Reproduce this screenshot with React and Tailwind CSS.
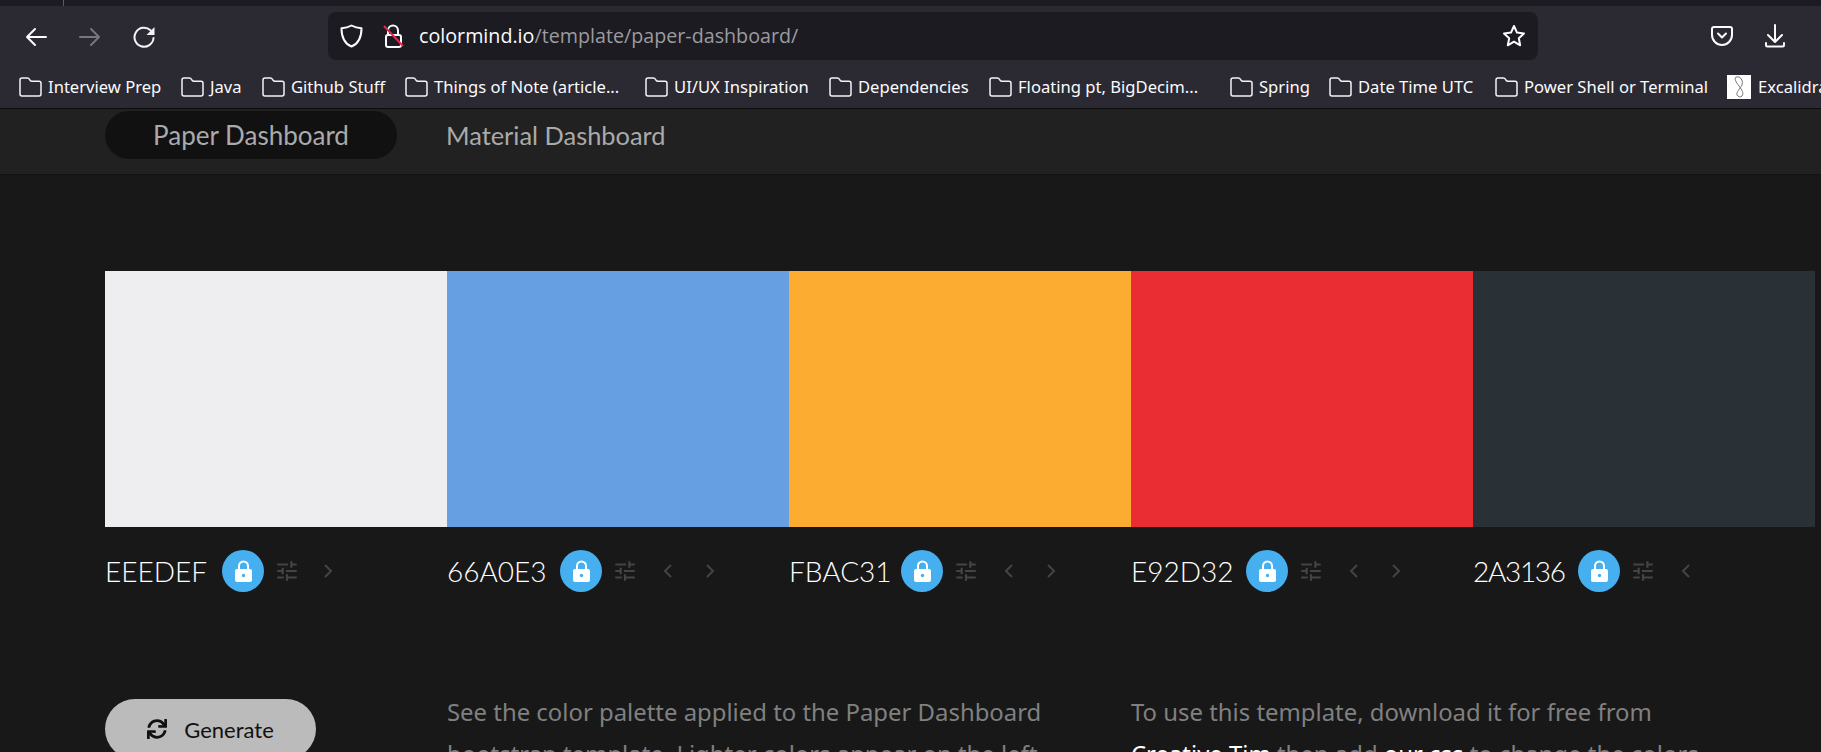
import { FaSync } from "react-icons/fa";

const bookmarks = [
  { label: "Interview Prep", width: "w-[162px]" },
  { label: "Java", width: "w-[81px]" },
  { label: "Github Stuff", width: "w-[143px]" },
  { label: "Things of Note (article...", width: "w-[240px]" },
  { label: "UI/UX Inspiration", width: "w-[184px]" },
  { label: "Dependencies", width: "w-[160px]" },
  { label: "Floating pt, BigDecim...", width: "w-[241px]" },
  { label: "Spring", width: "w-[99px]" },
  { label: "Date Time UTC", width: "w-[166px]" },
  { label: "Power Shell or Terminal", width: "w-[232px]" },
];

const swatches = [
  { hex: "EEEDEF", bg: "bg-[#eeedef]", label: "w-[117px]", left: false, right: true },
  { hex: "66A0E3", bg: "bg-[#66a0e3]", label: "w-[113px]", left: true, right: true },
  { hex: "FBAC31", bg: "bg-[#fbac31]", label: "w-[112px]", left: true, right: true },
  { hex: "E92D32", bg: "bg-[#e92d32]", label: "w-[115px]", left: true, right: true },
  { hex: "2A3136", bg: "bg-[#2a3136]", label: "w-[105px] tracking-[-1.3px]", left: true, right: false },
];

const FolderIcon = () => (
  <svg width="23" height="20" viewBox="0 0 23 20" fill="none" stroke="#f4f4f6" strokeWidth="1.5" className="shrink-0">
    <path d="M3 1h5.500c1 0 1.500.5 2 1.300l.8 1.200c.4.6.8.8 1.500.8H20a2 2 0 0 1 2 2V17a2 2 0 0 1-2 2H3a2 2 0 0 1-2-2V3a2 2 0 0 1 2-2z" />
  </svg>
);

const NavArrow = ({ flip, color }) => (
  <svg width="22" height="20" viewBox="0 0 22 20" fill="none" stroke={color} strokeWidth="2" strokeLinecap="round" strokeLinejoin="round" className={flip ? "-scale-x-100" : ""}>
    <path d="M21 10H2M10 2l-8 8 8 8" />
  </svg>
);

const ReloadIcon = () => (
  <svg width="24" height="24" viewBox="0 0 24 24" fill="none">
    <path d="M20.500 13a9.500 9.500 0 1 1-3-7.700" stroke="#f4f4f6" strokeWidth="2" strokeLinecap="round" />
    <path d="M21.500 2v8h-8z" fill="#f4f4f6" />
  </svg>
);

const ShieldIcon = () => (
  <svg width="23" height="24" viewBox="0 0 23 24" fill="none" stroke="#fbfbfe" strokeWidth="2" strokeLinejoin="round">
    <path d="M11.500 1.500c3 1.700 6 2.500 10 2.700 0 8-2 15-10 18.300C3.500 19.200 1.500 12.200 1.500 4.200c4-.2 7-1 10-2.700z" />
  </svg>
);

const BrokenLockIcon = () => (
  <svg width="22" height="26" viewBox="0 0 22 26" fill="none">
    <path d="M5 12V7.500a5 5 0 0 1 10 0V12" stroke="#fbfbfe" strokeWidth="2" />
    <rect x="3" y="12" width="15" height="12" rx="2" stroke="#fbfbfe" strokeWidth="2" />
    <path d="M1 3l19 20" stroke="#e22850" strokeWidth="2" />
  </svg>
);

const StarIcon = () => (
  <svg width="24" height="24" viewBox="0 0 24 24" fill="none" stroke="#fbfbfe" strokeWidth="2" strokeLinejoin="round">
    <path d="M12 2l3 6.600 7 .8-5.200 4.800 1.400 7.100L12 17.700l-6.200 3.600 1.400-7.100L2 9.400l7-.8z" />
  </svg>
);

const PocketIcon = () => (
  <svg width="22" height="20" viewBox="0 0 22 20" fill="none" stroke="#fbfbfe" strokeWidth="2" strokeLinecap="round" strokeLinejoin="round">
    <path d="M3 1h16a2 2 0 0 1 2 2v6a10 10 0 0 1-20 0V3a2 2 0 0 1 2-2z" />
    <path d="M7 7.500l4 4 4-4" />
  </svg>
);

const DownloadIcon = () => (
  <svg width="22" height="24" viewBox="0 0 22 24" fill="none" stroke="#fbfbfe" strokeWidth="2" strokeLinecap="round" strokeLinejoin="round">
    <path d="M11 1v16M4 11l7 7 7-7M2 19v2a1.500 1.500 0 0 0 1.500 1.500h15A1.500 1.500 0 0 0 20 21v-2" />
  </svg>
);

const LockIcon = () => (
  <svg width="17" height="22" viewBox="0 0 17 22" fill="none">
    <path d="M4 10V6a4.500 4.500 0 0 1 9 0v4" stroke="#fff" strokeWidth="2" />
    <rect x="0" y="9" width="17" height="13" rx="2" fill="#fff" />
    <circle cx="8.500" cy="15.500" r="1.700" fill="#46aff0" />
  </svg>
);

const TuneIcon = () => (
  <svg width="26" height="26" viewBox="0 0 24 24" fill="#444444">
    <path d="M3 17v2h6v-2H3zM3 5v2h10V5H3zm10 16v-2h8v-2h-8v-2h-2v6h2zM7 9v2H3v2h4v2h2V9H7zm14 4v-2H11v2h10zm-6-4h2V7h4V5h-4V3h-2v6z" />
  </svg>
);

const Chevron = ({ left }) => (
  <svg width="10" height="14" viewBox="0 0 10 14" fill="none" stroke="#444444" strokeWidth="2">
    <path d={left ? "M8 1L2 7l6 6" : "M2 1l6 6-6 6"} />
  </svg>
);

const App = () => {
  return (
    <div className="h-screen overflow-hidden bg-[#181818] font-['Noto_Sans',sans-serif]">
      {/* browser chrome */}
      <div className="h-[6px] bg-[#1c1b22] pl-[63px]">
        <div className="h-full w-px bg-[#5b5b66]"></div>
      </div>
      <div className="h-[102px] bg-[#2b2a33]">
        <div className="flex h-[54px] pt-[6px] items-center">
          <div className="flex items-center w-[328px] pl-[25px] mt-[1px]">
            <NavArrow color="#fbfbfe" />
            <div className="ml-[32px]">
              <NavArrow flip color="#77767d" />
            </div>
            <div className="ml-[32px]">
              <ReloadIcon />
            </div>
          </div>
          <div className="flex items-center w-[1210px] h-[48px] rounded-lg bg-[#1c1b22] pl-[12px] pr-[12px]">
            <ShieldIcon />
            <div className="ml-[20px]">
              <BrokenLockIcon />
            </div>
            <span className="ml-[14px] text-[19.700px] font-['Open_Sans',sans-serif] text-[#fbfbfe]">
              colormind.io<span className="text-[#9b9ba0]">/template/paper-dashboard/</span>
            </span>
            <div className="ml-auto">
              <StarIcon />
            </div>
          </div>
          <div className="ml-[173px] flex items-center gap-[31px]">
            <PocketIcon />
            <DownloadIcon />
          </div>
        </div>
        <div className="flex items-center h-[36px] mt-[9px] pl-[19px] whitespace-nowrap overflow-hidden">
          {bookmarks.map((b) => (
            <div key={b.label} className={`flex items-center gap-[6px] shrink-0 ${b.width}`}>
              <FolderIcon />
              <span className="text-[16.600px] text-[#fbfbfe]">{b.label}</span>
            </div>
          ))}
          <div className="flex items-center gap-[7px] shrink-0">
            <div className="w-[24px] h-[24px] bg-white flex items-center justify-center">
              <svg width="12" height="22" viewBox="0 0 12 22" fill="none" stroke="#666" strokeWidth="0.9">
                <path d="M3 1c-2 2 0 5 3 9s5 7 3 10c-1 1.500-4 1-5-1-1-3 3-6 5-10 1-3 0-7-3-8-1-.3-2 0-3 0z" />
              </svg>
            </div>
            <span className="text-[16.600px] text-[#fbfbfe]">Excalidraw</span>
          </div>
        </div>
      </div>
      <div className="h-px bg-[#0c0c0d]"></div>

      {/* template tabs */}
      <div className="flex h-[66px] pt-[2px] pl-[105px] bg-[#212121] border-b border-[#141414] font-['Lato',sans-serif] text-[#aaaaaa]">
        <div className="flex items-center justify-center w-[292px] h-[48px] rounded-full bg-[#111111] text-[26px]">
          Paper Dashboard
        </div>
        <div className="flex items-center h-[48px] pl-[49px] text-[25.400px]">Material Dashboard</div>
      </div>

      {/* palette */}
      <div className="pt-[96px] pl-[105px]">
        <div className="flex">
          {swatches.map((s) => (
            <div key={s.hex} className={`w-[342px] h-[256px] ${s.bg}`}></div>
          ))}
        </div>
        <div className="flex mt-[23px]">
          {swatches.map((s) => (
            <div key={s.hex} className="flex items-center w-[342px] h-[42px]">
              <span className={`font-['Lato',sans-serif] font-light text-[28px] text-white ${s.label}`}>{s.hex}</span>
              <div className="flex items-center justify-center w-[42px] h-[42px] rounded-full bg-[#46aff0]">
                <LockIcon />
              </div>
              <div className="ml-[10px]">
                <TuneIcon />
              </div>
              {s.left && (
                <div className="ml-[25px]">
                  <Chevron left />
                </div>
              )}
              {s.right && (
                <div className={s.left ? "ml-[32px]" : "ml-[23px]"}>
                  <Chevron />
                </div>
              )}
            </div>
          ))}
        </div>

        <div className="flex mt-[99px]">
          <div className="w-[342px] pt-[8px]">
            <button className="flex items-center justify-center gap-[17px] w-[211px] h-[60px] rounded-full bg-[#bbbbbb] text-[#111111] font-['Lato',sans-serif] text-[22px]">
              <FaSync size={20} />
              Generate
            </button>
          </div>
          <p className="w-[684px] text-[23.900px] leading-[42px] text-[#808080]">
            See the color palette applied to the Paper Dashboard
            <br />
            bootstrap template. Lighter colors appear on the left.
          </p>
          <p className="w-[684px] text-[23.900px] leading-[42px] text-[#808080]">
            To use this template, download it for free from
            <br />
            <span className="text-white">Creative Tim</span> then add <span className="text-white">our css</span> to change the colors.
          </p>
        </div>
      </div>
    </div>
  );
};

export default App;
